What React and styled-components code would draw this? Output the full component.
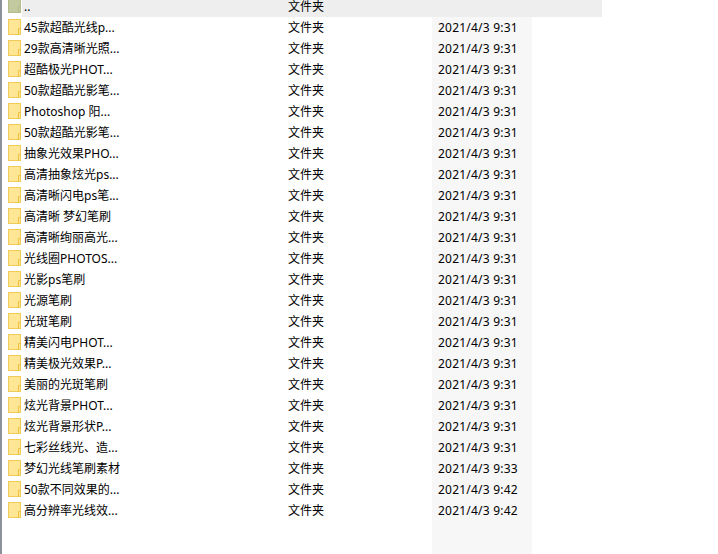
import React from "react";
import styled, { createGlobalStyle } from "styled-components";

const Global = createGlobalStyle`
  html, body { margin: 0; padding: 0; background: #fff; overflow: hidden; }
  #root { height: 554px; }
`;

const Page = styled.div`
  width: 718px;
  height: 554px;
  box-sizing: border-box;
  overflow: hidden;
  border-left: 2px solid #8c929c;
  background: linear-gradient(#f7f7f7, #f7f7f7) 430px 0 / 100px 100% no-repeat;
  font-size: 12px;
  color: #000;
`;

const List = styled.div`
  display: flex;
  flex-direction: column;
`;

const Row = styled.div`
  display: grid;
  grid-template-columns: 16px 264px 150px 1fr;
  height: 21px;
  line-height: 22px;
  padding-left: 6px;
  width: 594px;
  white-space: nowrap;
`;

const ParentRow = styled(Row)`
  height: 17px;
  line-height: 13px;
  background: linear-gradient(#eeeeee, #eeeeee) 20px 0 / 580px 100% no-repeat;
`;

const Cell = styled.span`
  font-family: "Noto Sans", "Noto Sans CJK SC", sans-serif;
  font-size: 12px;
`;

const DateCell = styled(Cell)`
  letter-spacing: 0.22px;
`;

const IconWrap = styled.span`
  display: flex;
  align-items: ${(p) => (p.$top ? "flex-end" : "flex-start")};
  height: ${(p) => (p.$top ? "13px" : "21px")};
  padding-top: ${(p) => (p.$top ? "0" : "2px")};
  box-sizing: border-box;
  overflow: hidden;
`;

const Folder = ({ dim }) => (
  <svg width="13" height="16" viewBox="0 0 13 16" aria-hidden="true" style={{ flex: "none" }}>
    <rect x="0.5" y="0.5" width="12" height="15" fill={dim ? "#c3c99e" : "#ffe694"} stroke={dim ? "#b5bc8a" : "#f0cb55"} />
    <path d="M10.5 15.5V9.5H12.5" fill="none" stroke={dim ? "#b5bc8a" : "#ecbf3f"} />
  </svg>
);

const rows = [
  ["45款超酷光线p...", "2021/4/3 9:31"],
  ["29款高清晰光照...", "2021/4/3 9:31"],
  ["超酷极光PHOT...", "2021/4/3 9:31"],
  ["50款超酷光影笔...", "2021/4/3 9:31"],
  ["Photoshop 阳...", "2021/4/3 9:31"],
  ["50款超酷光影笔...", "2021/4/3 9:31"],
  ["抽象光效果PHO...", "2021/4/3 9:31"],
  ["高清抽象炫光ps...", "2021/4/3 9:31"],
  ["高清晰闪电ps笔...", "2021/4/3 9:31"],
  ["高清晰 梦幻笔刷", "2021/4/3 9:31"],
  ["高清晰绚丽高光...", "2021/4/3 9:31"],
  ["光线圈PHOTOS...", "2021/4/3 9:31"],
  ["光影ps笔刷", "2021/4/3 9:31"],
  ["光源笔刷", "2021/4/3 9:31"],
  ["光斑笔刷", "2021/4/3 9:31"],
  ["精美闪电PHOT...", "2021/4/3 9:31"],
  ["精美极光效果P...", "2021/4/3 9:31"],
  ["美丽的光斑笔刷", "2021/4/3 9:31"],
  ["炫光背景PHOT...", "2021/4/3 9:31"],
  ["炫光背景形状P...", "2021/4/3 9:31"],
  ["七彩丝线光、造...", "2021/4/3 9:31"],
  ["梦幻光线笔刷素材", "2021/4/3 9:33"],
  ["50款不同效果的...", "2021/4/3 9:42"],
  ["高分辨率光线效...", "2021/4/3 9:42"],
];

export default function App() {
  return (
    <Page>
      <Global />
      <List>
        <ParentRow>
          <IconWrap $top><Folder dim /></IconWrap>
          <Cell>..</Cell>
          <Cell>文件夹</Cell>
          <Cell />
        </ParentRow>
        {rows.map(([name, date], i) => (
          <Row key={i}>
            <IconWrap><Folder /></IconWrap>
            <Cell>{name}</Cell>
            <Cell>文件夹</Cell>
            <DateCell>{date}</DateCell>
          </Row>
        ))}
      </List>
    </Page>
  );
}
